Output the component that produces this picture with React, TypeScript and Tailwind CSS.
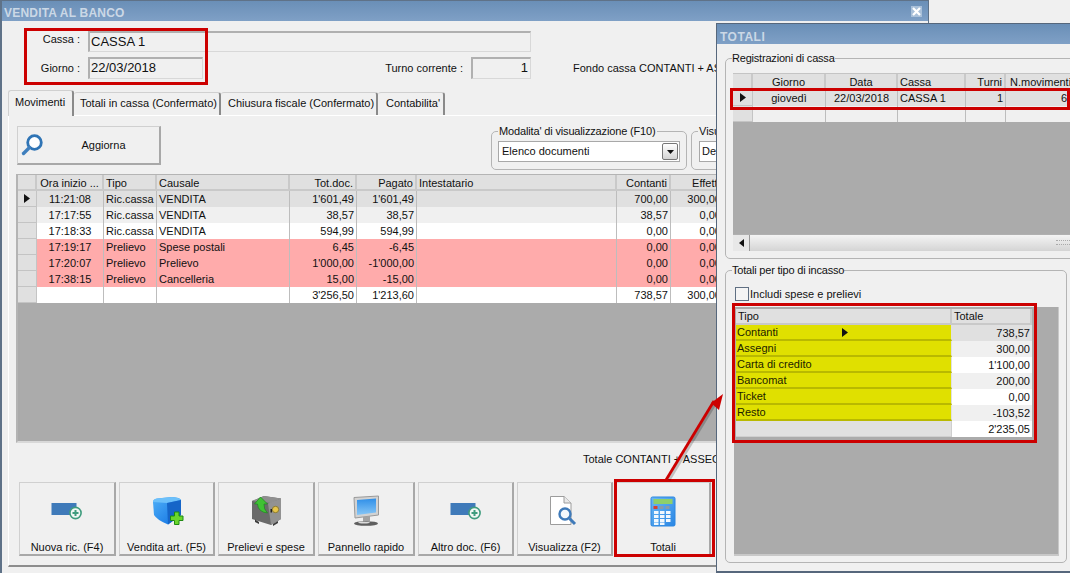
import React from "react";

const rows = [
  { o: "11:21:08", t: "Ric.cassa", c: "VENDITA", d: "1'601,49", p: "1'601,49", k: "700,00", e: "300,00", bg: "bg-[#e0e0e0]" },
  { o: "17:17:55", t: "Ric.cassa", c: "VENDITA", d: "38,57", p: "38,57", k: "38,57", e: "0,00", bg: "bg-[#f0f0f0]" },
  { o: "17:18:33", t: "Ric.cassa", c: "VENDITA", d: "594,99", p: "594,99", k: "0,00", e: "0,00", bg: "bg-white" },
  { o: "17:19:17", t: "Prelievo", c: "Spese postali", d: "6,45", p: "-6,45", k: "0,00", e: "0,00", bg: "bg-[#ffabab]" },
  { o: "17:20:07", t: "Prelievo", c: "Prelievo", d: "1'000,00", p: "-1'000,00", k: "0,00", e: "0,00", bg: "bg-[#ffabab]" },
  { o: "17:38:15", t: "Prelievo", c: "Cancelleria", d: "15,00", p: "-15,00", k: "0,00", e: "0,00", bg: "bg-[#ffabab]" },
  { o: "", t: "", c: "", d: "3'256,50", p: "1'213,60", k: "738,57", e: "300,00", bg: "bg-white" },
];

const totals = [
  { n: "Contanti", v: "738,57", bg: "bg-[#e0e0e0]", m: true },
  { n: "Assegni", v: "300,00", bg: "bg-[#f0f0f0]" },
  { n: "Carta di credito", v: "1'100,00", bg: "bg-white" },
  { n: "Bancomat", v: "200,00", bg: "bg-[#f0f0f0]" },
  { n: "Ticket", v: "0,00", bg: "bg-white" },
  { n: "Resto", v: "-103,52", bg: "bg-[#f0f0f0]" },
];

const Tri = () => (
  <svg width="6" height="9" viewBox="0 0 6 9"><path d="M0 0L6 4.5L0 9Z" fill="#111" /></svg>
);

const AddIcon = () => (
  <svg width="40" height="32" viewBox="0 0 40 32">
    <rect x="4.5" y="8" width="25" height="12" fill="#3f7ab9" />
    <circle cx="28.5" cy="18" r="5.6" fill="#f0f7f3" stroke="#3f9c7e" strokeWidth="1.6" />
    <path d="M25.5 18H31.5M28.5 15V21" stroke="#3f9c7e" strokeWidth="2" />
  </svg>
);

const CubeIcon = () => (
  <svg width="40" height="32" viewBox="0 0 40 32">
    <defs>
      <linearGradient id="cubeL" x1="0" y1="0" x2="1" y2="1">
        <stop offset="0" stopColor="#4fb0f8" />
        <stop offset="1" stopColor="#0f6fe0" />
      </linearGradient>
    </defs>
    <path d="M6 7Q6 4 10 3.500L25 2Q33 2.500 34 5V20L21 29.500Q10 25 7 20Z" fill="url(#cubeL)" />
    <path d="M6 7Q6 4 10 3.500L25 2Q33 2.500 34 5L20 8Z" fill="#6cc0fa" />
    <path d="M20 8L34 5V20L21 29.500Z" fill="#1565c8" />
    <path d="M27.500 17H32V21H36V25.500H32V29.500H27.500V25.500H23.500V21H27.500Z" fill="#6ad62c" stroke="#1f8a12" strokeWidth="1" />
  </svg>
);

const SafeIcon = () => (
  <svg width="40" height="32" viewBox="0 0 40 32">
    <path d="M6 6L18 1L35 3.500V24L25 30L6 24Z" fill="#6a6a6a" />
    <path d="M18 1L35 3.500L25 8L6 6Z" fill="#8f8f8f" />
    <path d="M22 8.500L35 3.500V24L25 30Z" fill="#929292" />
    <path d="M9 24.500L13 27V29L9 27ZM27 29L32 26V28L27 31Z" fill="#3c3c3c" />
    <circle cx="29.500" cy="14.500" r="3.200" fill="#e7c54a" stroke="#8a7a30" />
    <rect x="24.500" y="14" width="1.500" height="3.500" fill="#222" />
    <path d="M14.500 2L21.500 9H18Q17.500 14 21.500 18Q12 17 11.500 9H8.500Z" fill="#3fc233" stroke="#1c8a1f" strokeWidth="0.700" />
  </svg>
);

const MonitorIcon = () => (
  <svg width="40" height="32" viewBox="0 0 40 32">
    <defs>
      <linearGradient id="scr" x1="0" y1="0" x2="0" y2="1">
        <stop offset="0" stopColor="#2f8fe8" />
        <stop offset="1" stopColor="#86c6f6" />
      </linearGradient>
    </defs>
    <path d="M8 2.500L32.500 1V20L9 23Z" fill="#d2d2d2" stroke="#9a9a9a" />
    <path d="M11 5L30 3.500V17.500L11 20Z" fill="url(#scr)" />
    <path d="M17 22L24 21V26L17 27Z" fill="#a2a2a2" />
    <ellipse cx="20" cy="28.500" rx="12" ry="2.300" fill="#5f5f5f" />
    <ellipse cx="18" cy="27.600" rx="6" ry="0.900" fill="#dcdcdc" />
  </svg>
);

const DocIcon = () => (
  <svg width="40" height="32" viewBox="0 0 40 32">
    <path d="M5.500 1.500H19L26 8V29.500H5.500Z" fill="#fff" stroke="#9c9c9c" />
    <path d="M19 1.500V8H26" fill="#e8e8e8" stroke="#9c9c9c" />
    <circle cx="20" cy="19" r="5.500" fill="#f4f8fc" stroke="#3f7ab9" strokeWidth="2.400" />
    <path d="M24.500 23.500L30 29" stroke="#3f7ab9" strokeWidth="3" />
  </svg>
);

const CalcIcon = () => (
  <svg width="40" height="32" viewBox="0 0 40 32">
    <defs>
      <linearGradient id="calc" x1="0" y1="0" x2="1" y2="1">
        <stop offset="0" stopColor="#6ab8f4" />
        <stop offset="1" stopColor="#2a86e4" />
      </linearGradient>
    </defs>
    <rect x="8" y="2" width="24" height="29" rx="1.500" fill="url(#calc)" stroke="#2a86e0" />
    <rect x="10.500" y="4" width="19" height="5" fill="#8ed06a" />
    <rect x="10.500" y="11" width="4" height="3" fill="#d9412f" />
    <rect x="16.500" y="11" width="4" height="3" fill="#8a9aa8" />
    <rect x="22.500" y="11" width="4" height="3" fill="#8a9aa8" />
    {[16, 20, 24].flatMap((y) =>
      [11, 17, 23].map((x) => <rect key={x + "-" + y} x={x} y={y} width="4.500" height="3" fill="#f2f8fd" />)
    )}
    <rect x="11" y="27.500" width="4.500" height="2.500" fill="#f2f8fd" />
    <rect x="17" y="27.500" width="4.500" height="2.500" fill="#f2f8fd" />
  </svg>
);

const buttons = [
  { l: "Nuova ric. (F4)", i: <AddIcon />, w: "w-[97px]" },
  { l: "Vendita art. (F5)", i: <CubeIcon />, w: "w-[96px]" },
  { l: "Prelievi e spese", i: <SafeIcon />, w: "w-[97px]" },
  { l: "Pannello rapido", i: <MonitorIcon />, w: "w-[97px]" },
  { l: "Altro doc. (F6)", i: <AddIcon />, w: "w-[96px]" },
  { l: "Visualizza (F2)", i: <DocIcon />, w: "w-[96px]" },
  { l: "Totali", i: <CalcIcon />, w: "w-[95px]" },
];

const hdr = "border-r-2 border-b-2 border-[#c9c9c9] bg-[#e0e0e0] px-[2px] h-[16px] leading-[16px] whitespace-nowrap overflow-hidden";
const hdrT = "border-r-2 border-b-2 border-[#c9c9c9] bg-[#e0e0e0] px-[2px] h-[16px] leading-[15px] whitespace-nowrap overflow-hidden";
const cell = "border-r border-[#bdbdbd] px-[2px] h-[16px] leading-[16px] whitespace-nowrap overflow-hidden";
const cols = "grid grid-cols-[19px_67px_53px_133px_67px_60px_200px_54px_53px_200px]";
const cols2 = "grid grid-cols-[20px_73px_72px_68px_40px_120px]";
const field = "border border-t-2 border-l-2 border-[#b0b0b0] border-r-[#d8d8d8] border-b-[#d8d8d8] text-[13px] leading-[18px]";
const tab = "h-[23px] border-t border-r-2 border-[#d0d0d0] border-r-[#8a8a8a] rounded-t-[3px] leading-[21px] whitespace-nowrap";

export default function App() {
  return (
    <div className="relative w-[1070px] h-[573px] overflow-hidden bg-[#f0f0f0] text-[11px] text-[#111] font-['Liberation_Sans',Arial,sans-serif]">
      {/* Main window */}
      <div className="absolute left-0 top-0 w-[929px] h-[573px] flex flex-col border-l-2 border-r border-t border-[#5f7288] bg-[#f0f0f0]">
        <div className="h-[20px] shrink-0 flex items-center justify-between bg-gradient-to-b from-[#6a8fb7] to-[#7fa0c6] pl-[2px] pr-[6px]">
          <span className="pt-[5px] font-bold text-[12px] leading-[15px] text-[#cbd8e6] tracking-[0.2px]">VENDITA AL BANCO</span>
          <span className="w-[11px] h-[11px] bg-[#a9c0d9] flex items-center justify-center">
            <svg width="9" height="9" viewBox="0 0 9 9"><path d="M1 1L8 8M8 1L1 8" stroke="#fff" strokeWidth="2.200" /></svg>
          </span>
        </div>

        <div className="pt-[10px] flex flex-col gap-[5px] shrink-0">
          <div className="flex items-center">
            <span className="w-[78px] text-right pb-[4px]">Cassa :</span>
            <div className={field + " ml-[8px] w-[443px] h-[21px] pl-[1px]"}>CASSA 1</div>
          </div>
          <div className="flex items-center">
            <span className="w-[78px] text-right">Giorno :</span>
            <div className={field + " ml-[8px] w-[115px] h-[22px] pl-[1px]"}>22/03/2018</div>
            <span className="ml-[182px] w-[78px] text-right whitespace-nowrap">Turno corrente :</span>
            <div className={field + " ml-[8px] w-[60px] h-[22px] pr-[2px] text-right"}>1</div>
            <span className="ml-[42px] whitespace-nowrap">Fondo cassa CONTANTI + ASSEGNI</span>
          </div>
        </div>

        <div className="ml-[6px] mt-[10px] flex items-end h-[26px] shrink-0">
          <div className="h-[26px] w-[66px] border-t border-l border-r-2 border-[#d0d0d0] border-r-[#8a8a8a] rounded-t-[3px] bg-[#f0f0f0] pl-[6px] leading-[22px] -mb-px z-10">Movimenti</div>
          <div className={tab + " w-[147px] pl-[6px]"}>Totali in cassa (Confermato)</div>
          <div className={tab + " w-[157px] pl-[7px]"}>Chiusura fiscale (Confermato)</div>
          <div className={tab + " w-[67px] pl-[8px]"}>Contabilita'</div>
        </div>

        <div className="ml-[6px] h-[452px] shrink-0 flex flex-col border-t border-l border-white border-b-2 border-b-[#8d8d8d] pl-[8px] overflow-hidden">
          <div className="flex items-start h-[58px] shrink-0 pt-[10px]">
            <div className="w-[144px] h-[39px] flex items-center border border-r-2 border-b-2 border-[#d0d0d0] border-r-[#a8a8a8] border-b-[#a8a8a8]">
              <svg className="ml-[2px] shrink-0" width="24" height="24" viewBox="0 0 24 24">
                <circle cx="14.500" cy="9.500" r="6.800" fill="#fff" stroke="#2f74b5" strokeWidth="2.800" />
                <path d="M9.500 14.500L3.500 20.500" stroke="#3f7fbd" strokeWidth="3.400" strokeLinecap="round" />
              </svg>
              <span className="flex-1 text-center pl-[4px] pt-[1px]">Aggiorna</span>
            </div>
            <fieldset className="ml-[330px] w-[196px] h-[45px] -mt-[1px] border border-[#b4b4b4] rounded-[5px] px-[6px] shrink-0">
              <legend className="px-[1px] ml-[0px] leading-[13px] whitespace-nowrap tracking-[-0.15px]">Modalita' di visualizzazione (F10)</legend>
              <div className="h-[21px] mt-[3px] bg-white border border-[#a8a8a8] flex items-center justify-between pl-[3px] pr-[1px]">
                <span>Elenco documenti</span>
                <span className="w-[16px] h-[17px] border border-[#777] rounded-[2px] bg-gradient-to-b from-white to-[#d4d4d4] flex items-center justify-center">
                  <svg width="7" height="4" viewBox="0 0 7 4"><path d="M0 0H7L3.500 4Z" fill="#111" /></svg>
                </span>
              </div>
            </fieldset>
            <fieldset className="ml-[4px] w-[200px] h-[45px] -mt-[1px] border border-[#b4b4b4] rounded-[5px] px-[7px] shrink-0">
              <legend className="px-[1px] -ml-[1px] leading-[13px] whitespace-nowrap">Visualizzazione</legend>
              <div className="h-[21px] mt-[3px] bg-white border border-[#a8a8a8] pl-[2px] leading-[19px]">Dettaglio</div>
            </fieldset>
          </div>

          <div className="w-[905px] h-[269px] shrink-0 bg-[#ababab] border-t border-l-2 border-[#b4b4b4] border-b-2 border-b-[#d8d8d8] overflow-hidden -ml-px">
            <div className={cols}>
              <div className={hdr}></div>
              <div className={hdr + " text-center"}>Ora inizio ...</div>
              <div className={hdr}>Tipo</div>
              <div className={hdr}>Causale</div>
              <div className={hdr + " text-right"}>Tot.doc.</div>
              <div className={hdr + " text-right"}>Pagato</div>
              <div className={hdr}>Intestatario</div>
              <div className={hdr + " text-right"}>Contanti</div>
              <div className={hdr + " text-right"}>Effetti</div>
              <div className={hdr}></div>
            </div>
            {rows.map((r, i) => (
              <div key={i} className={cols + " " + r.bg}>
                <div className="bg-[#e0e0e0] border-r border-b border-[#c4c4c4] h-[16px] flex items-center justify-center">{i === 0 && <Tri />}</div>
                <div className={cell + " text-center"}>{r.o}</div>
                <div className={cell}>{r.t}</div>
                <div className={cell}>{r.c}</div>
                <div className={cell + " text-right"}>{r.d}</div>
                <div className={cell + " text-right"}>{r.p}</div>
                <div className={cell}></div>
                <div className={cell + " text-right"}>{r.k}</div>
                <div className={cell + " text-right"}>{r.e}</div>
                <div className={cell}></div>
              </div>
            ))}
          </div>

          <div className="h-[39px] shrink-0 pl-[566px] pt-[8px] whitespace-nowrap">Totale CONTANTI + ASSEGNI</div>

          <div className="flex gap-[3px] pl-[2px] h-[74px] shrink-0">
            {buttons.map((b) => (
              <div key={b.l} className={b.w + " h-[74px] shrink-0 flex flex-col items-center border border-r-2 border-b-2 border-[#d0d0d0] border-r-[#a8a8a8] border-b-[#a8a8a8] pt-[12px]"}>
                {b.i}
                <span className="mt-auto whitespace-nowrap leading-[14px]">{b.l}</span>
              </div>
            ))}
          </div>
        </div>
      </div>

      {/* Totali window */}
      <div className="absolute left-[716px] top-[23px] w-[354px] h-[550px] flex flex-col border-l border-t border-b-2 border-[#56677c] bg-[#f0f0f0] overflow-hidden">
        <div className="h-[20px] shrink-0 bg-gradient-to-b from-[#6a8fb7] to-[#7fa0c6] pl-[3px] font-bold text-[12px] leading-[26px] text-[#cbd8e6] tracking-[0.5px]">TOTALI</div>

        <fieldset className="ml-[8px] mt-[7px] w-[420px] h-[208px] shrink-0 border border-[#b4b4b4] rounded-[5px] px-[7px]">
          <legend className="-ml-[1px] px-0 leading-[14px] whitespace-nowrap tracking-[-0.2px]">Registrazioni di cassa</legend>
          <div className="mt-[8px] h-[178px] bg-[#ababab] border-t border-[#c4c4c4] flex flex-col overflow-hidden">
            <div className={cols2}>
              <div className={hdr}></div>
              <div className={hdr + " text-center"}>Giorno</div>
              <div className={hdr + " text-center"}>Data</div>
              <div className={hdr}>Cassa</div>
              <div className={hdr + " text-right"}>Turni</div>
              <div className={hdr + " pl-[4px]"}>N.movimenti</div>
            </div>
            <div className={cols2 + " bg-[#e0e0e0]"}>
              <div className="h-[16px] border-r border-b border-[#c4c4c4] flex items-center justify-center"><Tri /></div>
              <div className={cell + " text-center"}>giovedì</div>
              <div className={cell + " text-center"}>22/03/2018</div>
              <div className={cell}>CASSA 1</div>
              <div className={cell + " text-right"}>1</div>
              <div className={cell + " pl-[55px]"}>6</div>
            </div>
            <div className={cols2 + " bg-[#f0f0f0]"}>
              <div className="h-[16px] bg-[#e0e0e0] border-r border-b border-[#c4c4c4]"></div>
              <div className={cell}></div>
              <div className={cell}></div>
              <div className={cell}></div>
              <div className={cell}></div>
              <div className={cell}></div>
            </div>
            <div className="flex-1"></div>
            <div className="h-[17px] shrink-0 flex bg-gradient-to-b from-[#f4f4f4] to-[#d4d4d4] border-t border-[#b0b0b0]">
              <div className="w-[17px] border-r border-[#9a9a9a] bg-[#e8e8e8] flex items-center justify-center">
                <svg width="5" height="8" viewBox="0 0 5 8"><path d="M5 0V8L0 4Z" fill="#111" /></svg>
              </div>
              <div className="ml-[306px] w-[14px] mt-[5px] h-[5px] border-y border-dotted border-[#aaa]"></div>
            </div>
          </div>
        </fieldset>

        <fieldset className="ml-[8px] mt-[4px] w-[342px] h-[300px] shrink-0 border border-[#b4b4b4] rounded-[5px] pl-[8px] pr-[7px]">
          <legend className="-ml-[2px] px-0 leading-[14px] whitespace-nowrap tracking-[-0.2px]">Totali per tipo di incasso</legend>
          <div className="mt-[10px] flex items-center gap-[1px] h-[14px] ml-[1px]">
            <span className="w-[14px] h-[14px] border border-[#5f6f82] bg-[#f4f4f4] shrink-0"></span>
            <span>Includi spese e prelievi</span>
          </div>
          <div className="mt-[6px] h-[249px] bg-[#ababab] pl-[2px] pt-[2px] border-b-2 border-r border-[#c8c8c8]">
            <div className="w-[296px] grid grid-cols-[216px_80px] bg-[#e0e0e0]">
              <div className={hdrT}>Tipo</div>
              <div className={hdrT}>Totale</div>
              {totals.map((t) => (
                <React.Fragment key={t.n}>
                  <div className="h-[16px] bg-[#e0e000] border-b-2 border-[#b9b900] border-r border-r-[#e0e0e0] pl-[1px] leading-[15px] text-[#1c1c00] flex items-center">
                    <span className="w-[105px]">{t.n}</span>
                    {t.m && <Tri />}
                  </div>
                  <div className={t.bg + " h-[16px] leading-[16px] text-right pr-[2px]"}>{t.v}</div>
                </React.Fragment>
              ))}
              <div className="h-[16px] border-b border-r border-[#cfcfcf]"></div>
              <div className="h-[16px] bg-white leading-[16px] text-right pr-[2px]">2'235,05</div>
            </div>
          </div>
        </fieldset>
      </div>

      {/* Red annotations */}
      <div className="absolute left-[24px] top-[28px] w-[184px] h-[57px] border-[3px] border-[#cc0000]"></div>
      <div className="absolute left-[730px] top-[88px] w-[340px] h-[22px] border-[3px] border-[#cc0000]"></div>
      <div className="absolute left-[732px] top-[303px] w-[305px] h-[140px] border-[3px] border-[#cc0000]"></div>
      <div className="absolute left-[614px] top-[479px] w-[101px] h-[78px] border-[3px] border-[#cc0000]"></div>
      <svg className="absolute left-[640px] top-[380px]" width="100" height="110" viewBox="0 0 100 110">
        <path d="M29 100L75 24" stroke="#000" strokeOpacity="0.2" strokeWidth="3" />
        <path d="M26 100L74 21" stroke="#cc0000" strokeWidth="2.800" />
        <path d="M83 14L71 23L79 30Z" fill="#cc0000" />
      </svg>
    </div>
  );
}
